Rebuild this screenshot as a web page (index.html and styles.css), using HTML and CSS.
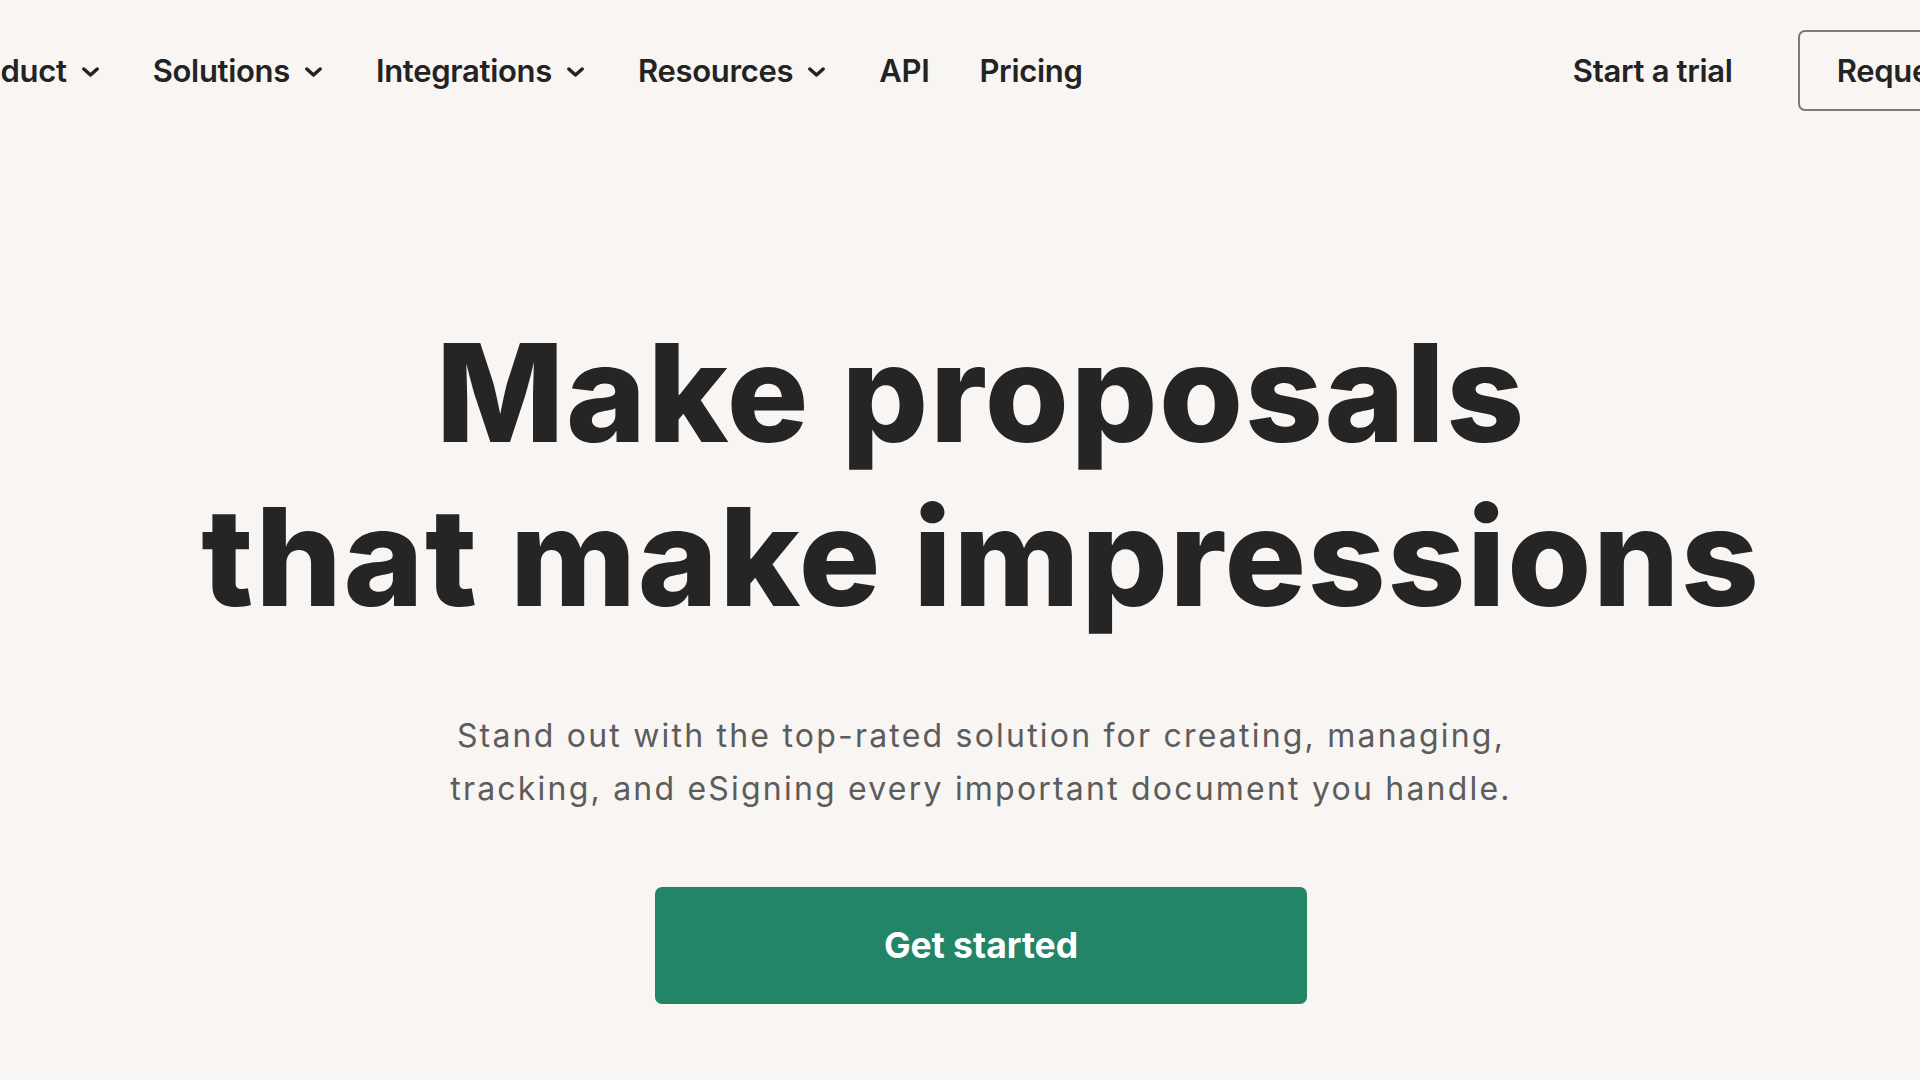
FILE: index.html
```html
<!DOCTYPE html>
<html lang="en">
<head>
    <meta charset="UTF-8">
    <meta name="viewport" content="width=device-width, initial-scale=1.0">
    <title>Make proposals that make impressions</title>
    <link rel="stylesheet" href="styles.css">
</head>
<body>
    <div class="page">
        <header class="site-header">
            <nav class="main-nav">
                <a href="#" class="nav-link">Product
                    <svg class="chevron" viewBox="0 0 14 8"><polyline points="1.5,1.5 7,6.5 12.5,1.5"/></svg>
                </a>
                <a href="#" class="nav-link">Solutions
                    <svg class="chevron" viewBox="0 0 14 8"><polyline points="1.5,1.5 7,6.5 12.5,1.5"/></svg>
                </a>
                <a href="#" class="nav-link">Integrations
                    <svg class="chevron" viewBox="0 0 14 8"><polyline points="1.5,1.5 7,6.5 12.5,1.5"/></svg>
                </a>
                <a href="#" class="nav-link">Resources
                    <svg class="chevron" viewBox="0 0 14 8"><polyline points="1.5,1.5 7,6.5 12.5,1.5"/></svg>
                </a>
                <a href="#" class="nav-link">API</a>
                <a href="#" class="nav-link">Pricing</a>
            </nav>
            <div class="header-actions">
                <a href="#" class="nav-link">Start a trial</a>
                <a href="#" class="btn-outline">Request a demo</a>
            </div>
        </header>

        <main class="hero">
            <h1>Make proposals<br>that make impressions</h1>
            <p class="hero-text">Stand out with the top-rated solution for creating, managing, tracking, and eSigning every important document you handle.</p>
            <a href="#" class="btn-primary">Get started</a>
        </main>
    </div>
</body>
</html>
```

FILE: styles.css
```css
body {
    margin: 0;
    background-color: #f8f5f2;
    font-family: Inter, "Liberation Sans", Arial, sans-serif;
    color: #242424;
    overflow: hidden;
}
a {
    color: inherit;
    text-decoration: none;
}
/* halaman lebih lebar dari jendela, digeser sedikit ke kiri */
.page {
    width: 2300px;
    margin-left: -169px;
}
.site-header {
    display: flex;
    align-items: center;
    height: 140px;
    padding: 0 19px 0 120px;
}
.main-nav {
    display: flex;
    align-items: center;
    gap: 50px;
}
.nav-link {
    display: flex;
    align-items: center;
    gap: 15px;
    font-size: 31px;
    font-weight: 600;
    letter-spacing: -0.01em;
    color: #232323;
}
.chevron {
    width: 17px;
    height: 10px;
    margin: 4px 4px 0 0;
    fill: none;
    stroke: #232323;
    stroke-width: 2.8;
    stroke-linecap: round;
    stroke-linejoin: round;
}
.header-actions {
    margin-left: auto;
    display: flex;
    align-items: center;
    gap: 65px;
}
.btn-outline {
    display: flex;
    align-items: center;
    height: 81px;
    box-sizing: border-box;
    padding: 0 37px;
    border: 2px solid #7a7a7a;
    border-radius: 7px;
    font-size: 31px;
    font-weight: 600;
    letter-spacing: -0.01em;
    color: #232323;
}
.hero {
    display: flex;
    flex-direction: column;
    align-items: center;
    text-align: center;
    padding-top: 171px;
}
.hero h1 {
    margin: 0;
    font-size: 136px;
    font-weight: 800;
    line-height: 164px;
    letter-spacing: 0.012em;
    color: #252525;
}
.hero-text {
    max-width: 1100px;
    margin: 70px 0 0;
    font-size: 32px;
    line-height: 53px;
    color: #5c5c5c;
    letter-spacing: 0.069em;
}
.btn-primary {
    display: flex;
    align-items: center;
    justify-content: center;
    width: 652px;
    height: 117px;
    margin-top: 72px;
    background-color: #238567;
    border-radius: 7px;
    color: white;
    font-size: 35.5px;
    font-weight: 700;
}
```
